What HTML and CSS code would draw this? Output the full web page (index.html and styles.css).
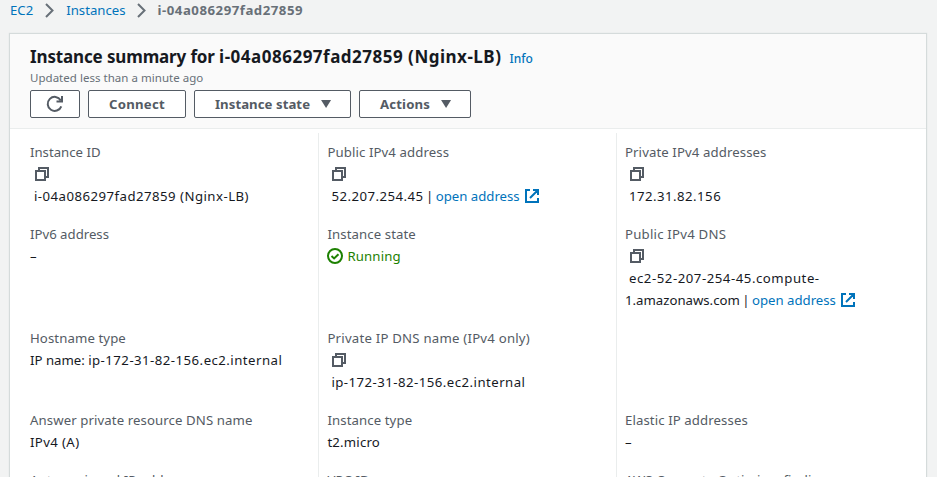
FILE: index.html
```html
<!DOCTYPE html>
<html lang="en">
<head>
<meta charset="utf-8">
<title>Instance summary</title>
<link rel="stylesheet" href="styles.css">
</head>
<body>
<svg class="defs" width="0" height="0" aria-hidden="true">
  <symbol id="copy" viewBox="0 0 14 14"><path d="M1 4h9v9H1zM4 4V1h9v9h-3" fill="none" stroke="currentColor" stroke-width="2"/></symbol>
  <symbol id="external" viewBox="0 0 14 14"><path d="M5 1H1v12h12V9M8 1h5v5M13 1L5 9" fill="none" stroke="currentColor" stroke-width="2"/></symbol>
  <symbol id="chevron" viewBox="0 0 9 15"><path d="M1 1l6.5 6.5L1 14" fill="none" stroke="currentColor" stroke-width="2"/></symbol>
</svg>
<nav class="crumbs">
  <a class="crumb-ec2">EC2</a>
  <svg class="chevron"><use href="#chevron"/></svg>
  <a class="crumb-list">Instances</a>
  <svg class="chevron"><use href="#chevron"/></svg>
  <span class="current">i-04a086297fad27859</span>
</nav>
<main class="card">
  <header class="head">
    <div class="title-row"><h1>Instance summary for <span class="id">i-04a086297fad27859 (Nginx-LB)</span></h1><a class="info">Info</a></div>
    <p class="updated">Updated less than a minute ago</p>
    <div class="actions">
      <button class="btn refresh" aria-label="Refresh"><svg width="18" height="18" viewBox="0 0 18 18"><path d="M15.3 11.3A7 7 0 1 1 14.7 5.2M16 1v5.5h-5.5" fill="none" stroke="currentColor" stroke-width="2"/></svg></button>
      <button class="btn connect">Connect</button>
      <button class="btn state">Instance state<i class="caret"></i></button>
      <button class="btn menu">Actions<i class="caret"></i></button>
    </div>
  </header>
  <dl class="grid">
    <div class="cell"><dt class="plain">Instance ID</dt><dd><svg class="copy"><use href="#copy"/></svg><span class="copied num">i-04a086297fad27859 (Nginx-LB)</span></dd></div>
    <div class="cell"><dt>Public IPv4 address</dt><dd><svg class="copy"><use href="#copy"/></svg><span class="copied linked"><span class="num">52.207.254.45</span> | <a>open address</a><svg class="ext"><use href="#external"/></svg></span></dd></div>
    <div class="cell"><dt>Private IPv4 addresses</dt><dd><svg class="copy"><use href="#copy"/></svg><span class="copied num">172.31.82.156</span></dd></div>

    <div class="cell"><dt class="plain">IPv6 address</dt><dd>–</dd></div>
    <div class="cell"><dt>Instance state</dt><dd class="running"><svg class="ok" viewBox="0 0 16 16"><circle cx="8" cy="8" r="7" fill="none" stroke="currentColor" stroke-width="2"/><path d="M4.5 8l2.6 2.4 4.4-4.2" fill="none" stroke="currentColor" stroke-width="2"/></svg>Running</dd></div>
    <div class="cell"><dt class="wide">Public IPv4 DNS</dt><dd><svg class="copy"><use href="#copy"/></svg><span class="copied num dns">ec2-52-207-254-45.compute-</span><span class="line linked">1.amazonaws.com | <a>open address</a><svg class="ext"><use href="#external"/></svg></span></dd></div>

    <div class="cell"><dt>Hostname type</dt><dd>IP name: <span class="num">ip-172-31-82-156.ec2.internal</span></dd></div>
    <div class="cell"><dt class="wide">Private IP DNS name (IPv4 only)</dt><dd><svg class="copy"><use href="#copy"/></svg><span class="copied num">ip-172-31-82-156.ec2.internal</span></dd></div>
    <div class="cell"></div>

    <div class="cell"><dt>Answer private resource DNS name</dt><dd class="host">IPv4 (A)</dd></div>
    <div class="cell"><dt>Instance type</dt><dd class="type">t2.micro</dd></div>
    <div class="cell"><dt>Elastic IP addresses</dt><dd>–</dd></div>

    <div class="cell"><dt>Auto-assigned IP address</dt></div>
    <div class="cell"><dt>VPC ID</dt></div>
    <div class="cell"><dt>AWS Compute Optimizer finding</dt></div>
  </dl>
</main>
</body>
</html>
```
FILE: styles.css
```css
* { box-sizing: border-box; }
html { height: 100%; overflow: hidden; }
body {
  margin: 0; height: 477px; overflow: hidden;
  background: #f2f3f3; color: #16191f;
  font: 13.2px/22px "Noto Sans", "Open Sans", sans-serif;
}
.defs { display: block; }
a { color: #0073bb; }
.crumbs { display: flex; align-items: center; height: 20px; padding-left: 10px; color: #687078; }
.chevron { width: 9px; height: 15px; margin: 0 12px; }
.crumb-list + .chevron { margin: 0 12px 0 11px; }
.current { font-weight: 700; letter-spacing: .53px; }
.card {
  width: 916px; margin: 14px 0 0 10px; background: #fff;
  box-shadow: 0 0 1px 1px #d5dbdb, 0 0 1px 0 #879596;
}
.head { height: 95px; padding: 10px 20px 0; background: #fafafa; border-bottom: 1px solid #eaeded; }
.title-row { display: flex; align-items: baseline; height: 26px; }
h1 { margin: 0; font-size: 17px; line-height: 26px; font-weight: 700; letter-spacing: -.14px; white-space: nowrap; }
.id { letter-spacing: .5px; }
.info { margin-left: 8px; font-size: 12px; font-weight: 500; }
.updated { margin: 0; height: 20px; font-size: 11.5px; line-height: 16px; letter-spacing: .03px; color: #687078; }
.actions { display: flex; gap: 8px; }
.btn {
  display: flex; align-items: center; justify-content: center;
  height: 28px; padding: 0; background: #fff; color: #545b64;
  border: 1px solid #545b64; border-radius: 2px;
  font: 700 13.2px/20px "Noto Sans", sans-serif; letter-spacing: .25px;
}
.refresh { width: 50px; }
.connect { width: 98px; }
.state { width: 157px; padding-left: 1px; letter-spacing: .05px; }
.menu { width: 112px; padding-left: 1px; letter-spacing: .15px; }
.caret { width: 10px; height: 8px; margin-left: 11px; background: #545b64; clip-path: polygon(0 0, 100% 0, 50% 100%); }
.grid { display: grid; grid-template-columns: 308px 298px 310px; margin: 4px 0 0; }
.cell { padding: 0 0 16px 8px; border-left: 1px solid #eaeded; white-space: nowrap; }
.cell:nth-child(3n + 2) { padding-left: 8.4px; }
.cell:nth-child(3n + 1) { padding-left: 20px; border-left: 0; }
.cell:nth-child(-n + 3) { padding-top: 8px; }
dt { color: #545b64; letter-spacing: .1px; }
dt.plain { letter-spacing: 0; }
dt.wide { letter-spacing: .22px; }
dd { margin: 0; }
.num { letter-spacing: .47px; }
.dns { letter-spacing: .54px; }
.host { letter-spacing: .38px; }
.type { letter-spacing: .2px; }
.linked { word-spacing: -1px; }
.linked a { word-spacing: 0; }
.copy { display: block; width: 14px; height: 14px; margin: 4px 0 4px 5px; color: #545b64; }
.copied { display: block; padding-left: 4px; }
.line { display: block; }
.ext { width: 14px; height: 14px; margin-left: 5px; vertical-align: -2px; color: #0073bb; }
.running { display: flex; align-items: center; gap: 4px; color: #1d8102; letter-spacing: .15px; }
.ok { width: 16px; height: 16px; }
```
